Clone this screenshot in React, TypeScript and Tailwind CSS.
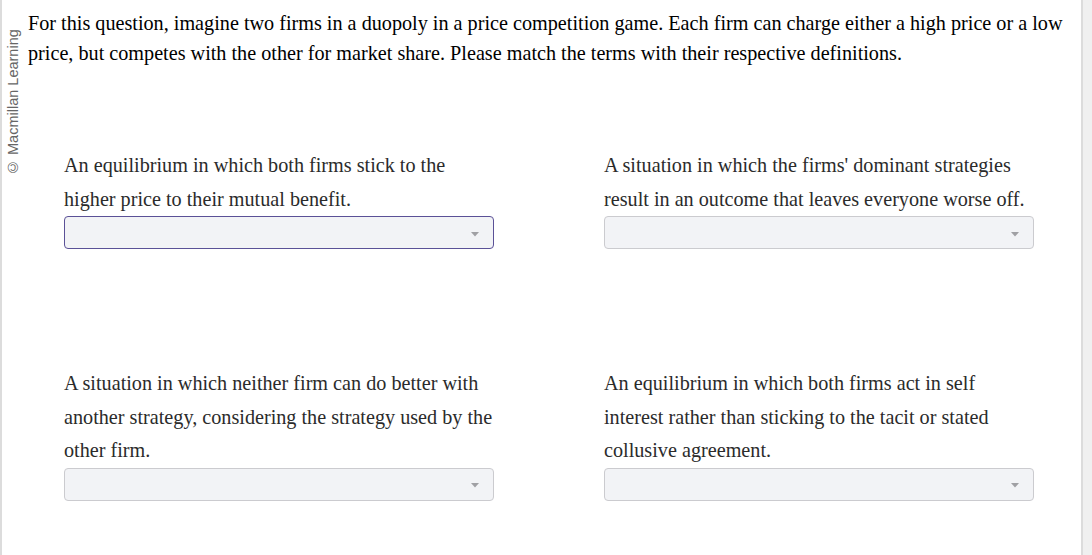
const items = [
  {
    id: 'a',
    text: 'An equilibrium in which both firms stick to the higher price to their mutual benefit.',
    focused: true,
  },
  {
    id: 'b',
    text: "A situation in which the firms' dominant strategies result in an outcome that leaves everyone worse off.",
    focused: false,
  },
  {
    id: 'c',
    text: 'A situation in which neither firm can do better with another strategy, considering the strategy used by the other firm.',
    focused: false,
  },
  {
    id: 'd',
    text: 'An equilibrium in which both firms act in self interest rather than sticking to the tacit or stated collusive agreement.',
    focused: false,
  },
]

function Dropdown({ focused }: { focused: boolean }) {
  return (
    <div
      className={`flex items-center justify-end h-[33px] rounded-[4px] bg-[#f2f3f6] pr-[14px] ${
        focused ? 'border-[1.5px] border-[#5b5197]' : 'border border-[#cbcbcf]'
      }`}
    >
      <svg width="8" height="5" viewBox="0 0 8 5" className="mt-[3px]">
        <path d="M0 0 L8 0 L4 4.5 Z" fill="#a0a0a4" />
      </svg>
    </div>
  )
}

export default function App() {
  return (
    <div className="flex w-[1092px] h-[555px] bg-[#f0f0f0] font-['Liberation_Serif',serif]">
      <div className="flex flex-1 bg-white border-l-2 border-[#dcdcdc] border-r-2">
        <div className="w-[26px] shrink-0 flex justify-center pt-[31px] pr-[3px]">
          <span className="[writing-mode:vertical-rl] rotate-180 text-[14.5px] leading-none text-[#666] font-['Liberation_Sans',sans-serif] whitespace-nowrap h-[144px]">
            © Macmillan Learning
          </span>
        </div>
        <div className="flex-1 pt-[8px]">
          <p className="text-[20.2px] leading-[30px] text-black pr-[10px]">
            For this question, imagine two firms in a duopoly in a price competition game. Each firm can charge
            either a high price or a low price, but competes with the other for market share. Please match the
            terms with their respective definitions.
          </p>
          <div className="grid grid-cols-[430px_430px] gap-x-[110px] gap-y-[118px] pl-[36px] mt-[81px]">
            {items.map((item) => (
              <div key={item.id} className="flex flex-col">
                <p className="text-[20.2px] leading-[33.5px] text-[#2b2b2b]">{item.text}</p>
                <Dropdown focused={item.focused} />
              </div>
            ))}
          </div>
        </div>
      </div>
      <div className="w-[9px]" />
    </div>
  )
}
